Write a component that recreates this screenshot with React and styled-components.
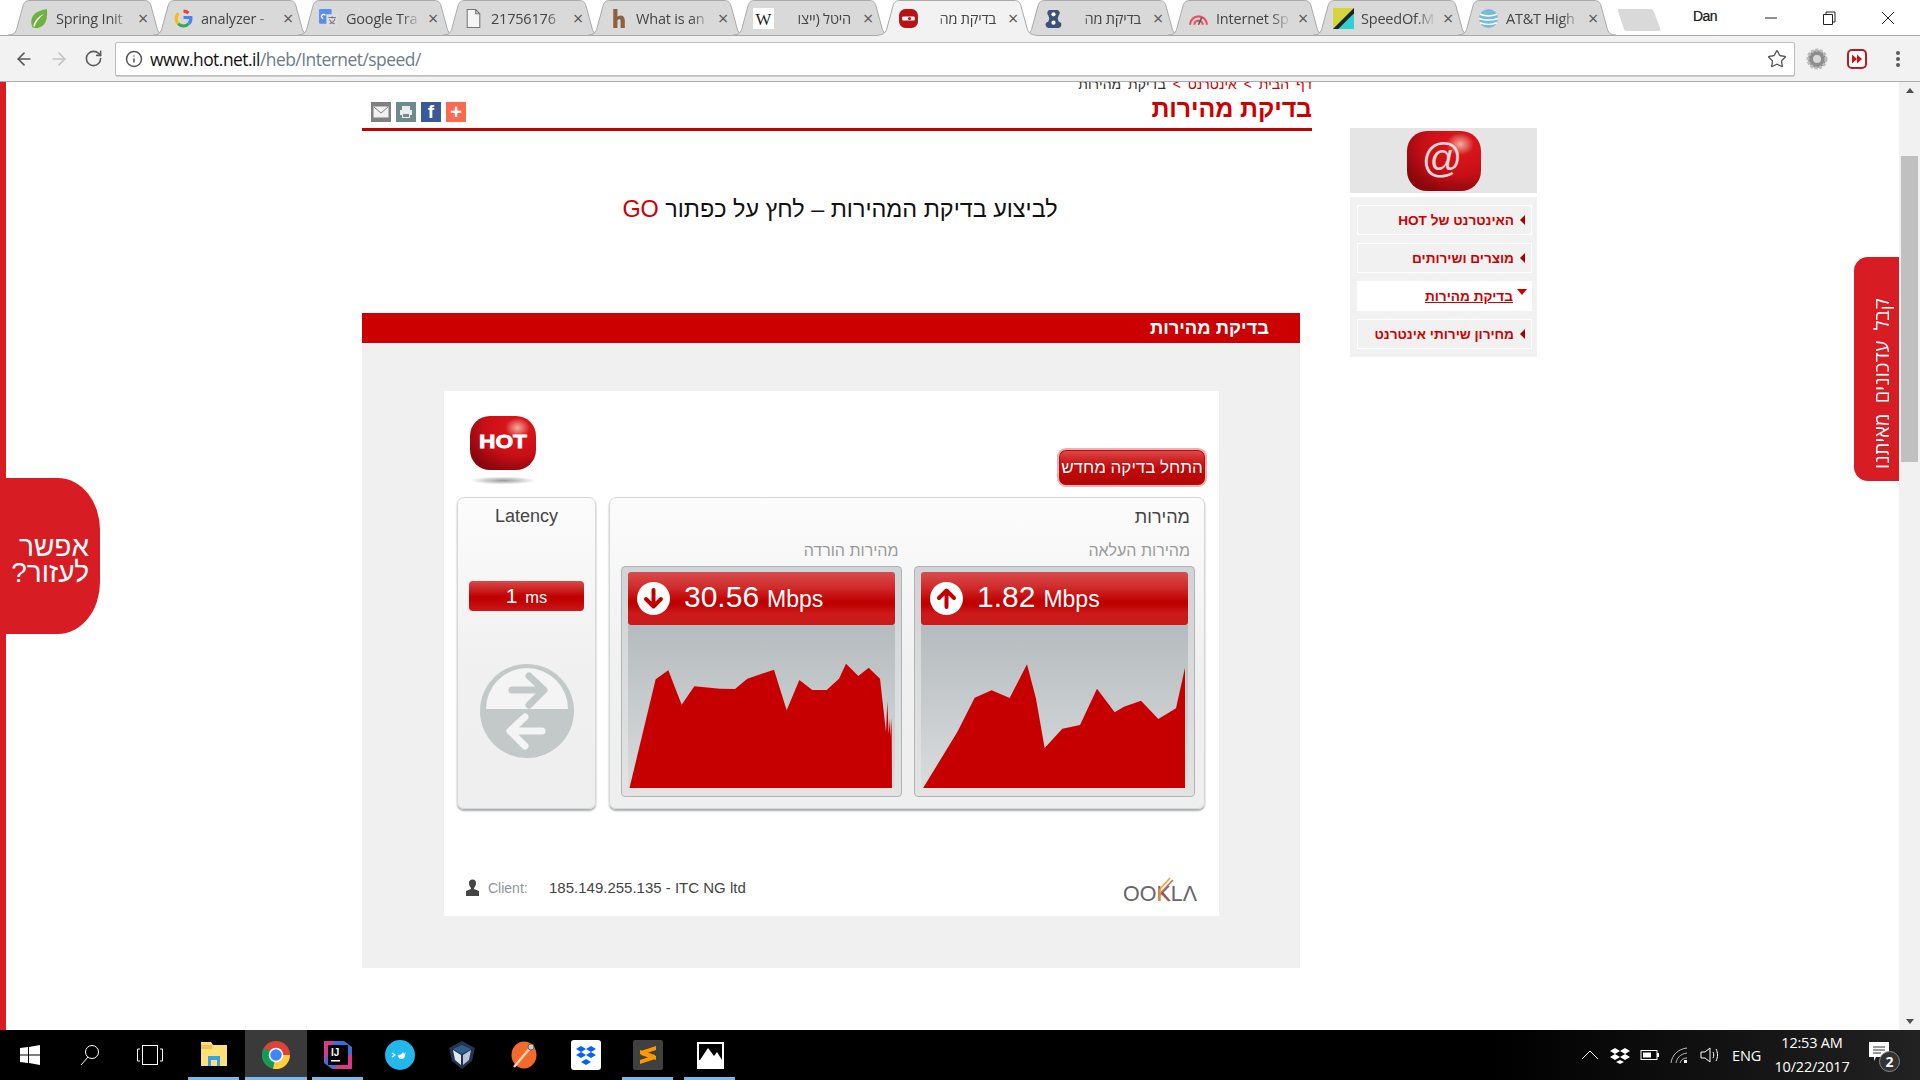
import React from 'react';
import styled, { createGlobalStyle } from 'styled-components';
import { ArrowLeft, ArrowRight, RotateCw, Info, Star } from 'lucide-react';

const Global = createGlobalStyle`
  html, body { margin: 0; padding: 0; height: 100%; overflow: hidden; background: #fff; }
  #root { height: 100%; }
  * { box-sizing: border-box; }
`;

const Shell = styled.div`
  width: 1920px; height: 1080px; display: flex; flex-direction: column; overflow: hidden;
  font-family: "Liberation Sans", Arial, sans-serif;
`;

/* ---------- browser chrome ---------- */
const TabStrip = styled.div`
  height: 36px; flex: none; display: flex; align-items: flex-start; padding-left: 8px; background: #fff;
  border-bottom: 1px solid #a9a9a9; position: relative;
`;
const TabBox = styled.div`
  position: relative; width: 160px; height: 36px; flex: none; margin-right: -15px;
  z-index: ${p => (p.$active ? 5 : 1)};
  display: flex; align-items: center; padding: 0 20px 0 20px; gap: 7px;
`;
const TabShape = styled.svg`
  position: absolute; left: 0; top: 0; width: 160px; height: 36px;
`;
const TabIcon = styled.svg`
  position: relative; width: 21px; height: 21px; flex: none;
`;
const TabTitle = styled.span`
  position: relative; flex: 1; min-width: 0; overflow: hidden; white-space: nowrap;
  font: 14.5px "Open Sans", sans-serif; color: #444; letter-spacing: -0.2px;
  direction: ${p => (p.$rtl ? 'rtl' : 'ltr')};
  padding-right: ${p => (p.$rtl ? 5 : 0)}px;
  -webkit-mask-image: linear-gradient(${p => (p.$rtl ? 'to left' : 'to right')}, #000 74%, transparent 100%);
  mask-image: linear-gradient(${p => (p.$rtl ? 'to left' : 'to right')}, #000 74%, transparent 100%);
`;
const TabClose = styled.span`
  position: relative; flex: none; font: 18px "Open Sans", sans-serif; color: #5a5a5a; width: 10px; text-align: center;
`;
const NewTab = styled.svg`
  width: 44px; height: 24px; margin: 8px 0 0 15px; flex: none; position: relative; z-index: 2;
`;
const WinArea = styled.div`
  margin-left: auto; display: flex; align-items: center; height: 34px; position: relative; margin-right: 2px;
`;
const UserName = styled.span`
  font: 14px "Liberation Sans", sans-serif; color: #222; margin-right: 25px; margin-top: -3px; letter-spacing: -.6px;
  text-shadow: 0 0 1px #888;
`;
const WinBtn = styled.svg`
  width: ${p => p.$w || 58}px; height: 14px; flex: none; margin-top: 2px;
`;

const Toolbar = styled.div`
  height: 46px; flex: none; background: #f2f2f2; border-bottom: 1px solid #acacac;
  display: flex; align-items: center; padding-left: 14px;
`;
const NavBtn = styled.span`
  width: 35px; display: flex; color: ${p => p.$off ? '#c4c4c4' : '#5a5a5a'};
`;
const Omnibox = styled.div`
  width: 1680px; height: 34px; margin-left: -4px; background: #fff; border: 1px solid #bdbdbd; border-radius: 2px;
  display: flex; align-items: center; padding: 0 7px 0 9px;
  box-shadow: 0 1px 0 #d0d0d0;
`;
const Url = styled.span`
  font: 17.4px "Open Sans", sans-serif; letter-spacing: -.5px; color: #111; margin-left: 7px; flex: 1;
  b { font-weight: 400; color: #6d7b8a; }
`;
const ToolIcons = styled.div`
  display: flex; align-items: center; flex: none;
`;
const ExtIcon = styled.svg`
  width: ${p => p.$w || 22}px; height: 22px; flex: none; margin-left: ${p => p.$ml}px;
`;

/* ---------- page ---------- */
const Viewport = styled.div`
  flex: 1; min-height: 0; display: flex; position: relative; overflow: hidden;
  border-left: 6px solid #d81c24; background: #fff;
`;
const Page = styled.div`
  flex: 1; display: flex; align-items: flex-start; padding-left: 356px; min-width: 0;
`;
const Main = styled.main`
  width: 950px; flex: none; direction: rtl;
`;
const Crumbs = styled.div`
  height: 8px; line-height: 12px; font-size: 14px; color: #333; overflow: visible;
  transform: translateY(-4px); word-spacing: 3px;
  span { color: #cc0000; }
`;
const TitleRow = styled.div`
  height: 41px; display: flex; justify-content: space-between; align-items: flex-start;
  border-bottom: 3px solid #c40000; padding: 5px 0 0 9px;
`;
const PageTitle = styled.h1`
  margin: 0; font-size: 25px; line-height: 26px; font-weight: 700; color: #cc0000; letter-spacing: -.1px;
`;
const ShareRow = styled.div`
  display: flex; gap: 5px; direction: ltr; margin-top: 7px; order: 2;
`;
const ShareBtn = styled.span`
  width: 20px; height: 20px; background: ${p => p.$c}; display: flex; align-items: center; justify-content: center;
  color: #fff; font: 700 ${p => p.$fs || 16}px "Liberation Sans", sans-serif;
`;
const Lead = styled.h2`
  margin: 0; height: 182px; padding: 64px 0 0 6px; text-align: center; font-weight: 400; font-size: 23.4px; line-height: 28px; color: #111;
  span { color: #cc0000; }
`;
const Band = styled.div`
  width: 938px; margin-right: 12px; height: 30px; background: #cc0000; color: #fff; font-weight: 700; font-size: 18.4px; line-height: 30px; padding-right: 31px;
`;
const Panel = styled.section`
  width: 938px; margin-right: 12px; height: 625px; background: #f0f0f0; padding: 48px 81px 0 82px; direction: ltr;
`;
const Card = styled.div`
  width: 775px; height: 525px; background: #fff; padding: 0 14px 0 13px;
`;
const CardTop = styled.div`
  height: 106px; display: flex; justify-content: space-between; align-items: flex-start;
`;
const Logo = styled.svg`
  width: 70px; height: 72px; margin: 25px 0 0 11px;
`;
const Restart = styled.button`
  width: 150px; height: 39px; margin: 57px -2px 0 0; padding: 0 2px; border: 2px solid #eeb0b0; border-radius: 9px;
  background: linear-gradient(#e04c4c 0, #cc2222 30%, #c40808 55%, #b00808 100%);
  color: #fff; font: 17px "Liberation Sans", sans-serif; direction: rtl; text-shadow: 0 0 1px #700; white-space: nowrap;
  box-shadow: inset 0 0 0 1px #b80c0c;
`;
const Panes = styled.div`
  display: flex; gap: 13px; height: 312px;
`;
const Pane = styled.div`
  height: 312px; border: 1px solid #d6d8d8; border-radius: 7px; width: ${p => p.$w}px; flex: none;
  background: linear-gradient(#fcfcfc 0, #f0f0f0 55%, #efefef 100%);
  box-shadow: 0 2px 2px #a8adaf;
`;
const LatencyPane = styled(Pane)`
  display: flex; flex-direction: column; align-items: center;
`;
const PaneTitle = styled.div`
  font-size: 18px; line-height: 22px; color: #444; padding-top: 7px;
`;
const LatencyValue = styled.div`
  width: 115px; height: 30px; margin-top: 54px; border-radius: 4px; color: #fff; text-align: center; line-height: 30px;
  background: linear-gradient(#d84a4a 0, #c00000 52%, #c00000 62%, #cc1818 100%);
  font-size: 16.5px;
  b { font-weight: 400; font-size: 21px; margin-right: 3px; }
`;
const LatencyDial = styled.svg`
  width: 96px; height: 96px; margin-top: 52px;
`;
const SpeedPane = styled(Pane)`
  direction: rtl; padding: 0 14px 0 11px;
`;
const SpeedTitle = styled(PaneTitle)`
  padding: 8px 0 0 0; height: 40px;
`;
const Labels = styled.div`
  display: flex; gap: 14px; height: 28px;
`;
const Label = styled.div`
  width: 282px; font-size: 16px; line-height: 26px; color: #9a9a9a;
`;
const Gauges = styled.div`
  display: flex; gap: 12px; direction: ltr;
`;
const Gauge = styled.div`
  width: 281px; height: 231px; border: 1px solid #b0b4b6; border-radius: 4px; padding: 5px 6px 0;
  background: linear-gradient(#d0d4d6, #e3e3e3);
`;
const GaugeHead = styled.div`
  height: 53px; border-radius: 3px; display: flex; align-items: center; color: #fff; padding-left: 9px;
  background: linear-gradient(#d84c4c 0, #cf2a2a 30%, #c00000 55%, #c00000 62%, #cc1a1a 78%);
`;
const GaugeIcon = styled.svg`
  width: 33px; height: 33px; flex: none; margin-right: 14px;
`;
const Num = styled.span`
  font-size: 30px; line-height: 30px; margin-right: 8px; margin-top: -4px;
`;
const Unit = styled.span`
  font-size: 23px; margin-top: 2px;
`;
const ChartBox = styled.div`
  height: 163px; background: linear-gradient(#b5bbbe, #d9dcdd);
`;
const Chart = styled.svg`
  display: block; width: 267px; height: 163px;
`;
const Foot = styled.div`
  display: flex; align-items: flex-start; height: 107px; padding-top: 70px; font-size: 14px; color: #444;
`;
const ClientIcon = styled.svg`
  width: 15px; height: 17px; margin-left: 8px; flex: none;
`;
const ClientLabel = styled.span`
  color: #8d9499; margin-left: 8px; width: 61px; line-height: 18px;
`;
const ClientValue = styled.span`
  line-height: 18px; font-size: 15px;
`;
const Ookla = styled.svg`
  width: 76px; height: 28px; margin-left: auto; margin-right: 6px; margin-top: -2px;
`;

const Side = styled.aside`
  width: 187px; flex: none; margin-left: 38px; margin-top: 46px; direction: rtl;
`;
const SideHero = styled.div`
  height: 65px; background: #e5e5e5; display: flex; align-items: center; justify-content: center;
`;
const SideIcon = styled.svg`
  width: 74px; height: 60px; margin-left: 1px;
`;
const SideMenu = styled.nav`
  margin-top: 4px; background: #f1f1f1; padding: 8px 5px 8px 7px; display: flex; flex-direction: column; gap: 8px;
`;
const SideItem = styled.a`
  height: 30px; border: 1px solid #fff; background: ${p => (p.$on ? '#fff' : 'transparent')}; display: flex; align-items: center;
  padding-right: 5px; gap: 5px; color: #cc0000; font-weight: 700; font-size: 13.6px;
  text-decoration: ${p => (p.$on ? 'underline' : 'none')};
`;
const Caret = styled.i`
  width: 0; height: 0; flex: none; border-style: solid;
  ${p => p.$on
    ? 'border-width: 6px 5px 0 5px; border-color: #cc0000 transparent transparent; margin: -8px -1px 0 -1px;'
    : 'border-width: 5px 5px 5px 0; border-color: transparent #a80000 transparent transparent; margin-left: 1px; margin-right: 1px;'}
`;

const Scrollbar = styled.div`
  width: 21px; flex: none; background: #f1f1f1; display: flex; flex-direction: column; align-items: center; padding-top: 6px; position: relative;
`;
const ScrollArrow = styled.i`
  width: 0; height: 0; border-left: 4px solid transparent; border-right: 4px solid transparent;
  ${p => p.$down ? 'border-top: 5px solid #505050; margin-top: auto; margin-bottom: 6px;' : 'border-bottom: 5px solid #505050;'}
`;
const ScrollThumb = styled.div`
  width: 17px; height: 306px; background: #c0c0c0; margin-top: 63px;
`;

const HelpBlob = styled.div`
  position: absolute; left: 0; top: 396px; width: 94px; height: 156px; background: #d81c24;
  border-radius: 0 42px 42px 0 / 0 52px 52px 0;
  color: #fff; direction: rtl; font-size: 28px; line-height: 26px; padding: 56px 11px 0 0; text-align: right;
  display: flex; flex-direction: column;
`;
const UpdatesTab = styled.div`
  position: absolute; right: 21px; top: 175px; width: 45px; height: 224px; background: #d81c24; border-radius: 14px 0 0 14px;
  display: flex; align-items: center; justify-content: flex-start; padding-bottom: 12px;
`;
const UpdatesText = styled.span`
  writing-mode: vertical-rl; transform: rotate(180deg); direction: rtl; color: #fff; font-size: 20px; white-space: pre;
  margin: 0 0 0 14px; height: 212px; text-align: left;
  font-family: "Open Sans", sans-serif;
`;

/* ---------- taskbar ---------- */
const Taskbar = styled.div`
  height: 50px; flex: none; display: flex; align-items: stretch;
  background: linear-gradient(90deg, #000 0, #000 78%, #222 100%);
`;
const SysBtn = styled.div`
  width: 60px; flex: none; display: flex; align-items: center; justify-content: center;
`;
const AppBtn = styled.div`
  width: 62px; flex: none; display: flex; align-items: center; justify-content: center; position: relative;
  margin-left: ${p => p.$ml || 0}px;
  background: ${p => (p.$active ? '#3a3a3a' : 'transparent')};
  &::after {
    content: ''; position: absolute; bottom: 0; height: 3px; background: #76b9ed;
    left: ${p => (p.$active ? 0 : '5px')}; right: ${p => (p.$active ? 0 : '6px')};
    display: ${p => (p.$open ? 'block' : 'none')};
  }
`;
const Tray = styled.div`
  margin-left: auto; display: flex; align-items: center; color: #fff; font: 15px "Open Sans", sans-serif;
`;
const TrayIcon = styled.svg`
  width: 22px; height: 20px; margin-right: 8px; flex: none;
`;
const Lang = styled.span`
  margin: 0 0 0 3px; font-size: 14.5px; letter-spacing: -.2px;
`;
const Clock = styled.div`
  width: 100px; margin-left: 1px; text-align: center; line-height: 24px; font-size: 14.5px; letter-spacing: -.2px;
`;
const Notify = styled.div`
  width: 31px; height: 32px; position: relative; margin: 6px 20px 0 7px;
`;
const NotifyBadge = styled.span`
  position: absolute; left: 10px; top: 9px; width: 21px; height: 21px; border-radius: 50%; background: #333; border: 1px solid #888;
  font: 700 14px/19px "Open Sans", sans-serif; text-align: center; color: #fff;
`;

/* ---------- drawings ---------- */
const fav = {
  spring: <><path d="M4 18C1 10 5 3 18 1c1 9-1 17-9 18-2 0-4 0-5-1z" fill="#6db33f" /><path d="M5 17C7 11 10 8 15 6 11 9 8 13 6 18z" fill="#fff" /></>,
  google: <><path d="M10 3a7 7 0 0 1 4.8 1.9" fill="none" stroke="#ea4335" strokeWidth="3" /><path d="M5.2 5A7 7 0 0 0 5 15" fill="none" stroke="#fbbc05" strokeWidth="3" /><path d="M5 15a7 7 0 0 0 10 0" fill="none" stroke="#34a853" strokeWidth="3" /><path d="M15 15a7 7 0 0 0 2-6h-7" fill="none" stroke="#4285f4" strokeWidth="3" /></>,
  translate: <><rect x="1" y="1" width="12" height="14" rx="1" fill="#5b8def" /><rect x="8" y="6" width="11" height="12" fill="#ddd" /><path d="M10 9h7M13.5 8v2M11 15c3-1 5-3 5-5M11 11c1 2 3 4 5 4" stroke="#777" fill="none" /><path d="M5 10a2 2 0 1 1 2-3" fill="none" stroke="#fff" strokeWidth="1.3" /></>,
  doc: <path d="M4 1.5h8l4 4v13H4zM12 1.5v4h4" fill="#f5f5f5" stroke="#777" />,
  h: <path d="M5 1h4v7c4-2 7 0 7 4v7h-4v-7c0-1.500-2-2-3 0v7H5z" fill="#8a6240" />,
  wiki: <><rect width="20" height="20" fill="#fff" /><text x="10" y="16" fontSize="16" fontFamily="Liberation Serif" textAnchor="middle" fill="#222">W</text></>,
  hot: <><rect x="1" y="1" width="18" height="18" rx="6" fill="#b81217" /><rect x="4" y="8" width="12" height="4" fill="#fff" rx="1" /><circle cx="11" cy="10" r="1.500" fill="#b81217" /></>,
  bee: <><path d="M6 2h8a3 3 0 0 1 1 5l-1 3 1 3a3 3 0 0 1-1 6H6a3 3 0 0 1-1-6l1-3-1-3a3 3 0 0 1 1-5z" fill="#3c5078" /><circle cx="10" cy="6" r="2" fill="#fff" /><circle cx="10" cy="14" r="2" fill="#fff" /></>,
  arc: <><path d="M2 16a8 8 0 0 1 16 0" fill="none" stroke="#e8505b" strokeWidth="2" /><path d="M6 16a4 4 0 0 1 8 0" fill="none" stroke="#e8505b" strokeWidth="2" /><path d="M10 16l3-7" stroke="#555" strokeWidth="1.500" /></>,
  speedof: <><rect width="20" height="20" fill="#d6d63a" /><path d="M20 0v20H0z" fill="#2fd0d8" /><path d="M0 20L20 0v5L5 20z" fill="#222" /></>,
  att: <><circle cx="10" cy="10" r="9" fill="#7ab8dc" /><path d="M2 6c5 2 11 2 16 0M1 10c6 2 12 2 18 0M2 14c5 2 11 2 16 0" stroke="#fff" strokeWidth="1.400" fill="none" /></>,
};

const tabs = [
  ['Spring Init', 'spring'], ['analyzer -', 'google'], ['Google Tra', 'translate'],
  ['21756176', 'doc'], ['What is an', 'h'], ['היטל (ייצו', 'wiki', 1], ['בדיקת מה', 'hot', 1, 1],
  ['בדיקת מה', 'bee', 1], ['Internet Sp', 'arc'], ['SpeedOf.M', 'speedof'], ['AT&T High', 'att'],
];

function Tab({ title, icon, rtl, active }) {
  const d = 'M0 35C6 35 8 32 9 28L15 6C16 2 18 .5 22 .5L136 .5C140 .5 142 2 143 6L149 28C150 32 152 35 158 35';
  return (
    <TabBox $active={active}>
      <TabShape viewBox="0 0 160 36">
        <path d={d + (active ? 'L158 36L0 36Z' : 'Z')} fill={active ? '#f2f2f2' : '#d9d9d9'} stroke="none" />
        <path d={d} fill="none" stroke="#a9a9a9" />
      </TabShape>
      <TabIcon viewBox="0 0 20 20">{fav[icon]}</TabIcon>
      <TabTitle $rtl={rtl}>{title}</TabTitle>
      <TabClose>×</TabClose>
    </TabBox>
  );
}

const dl = '568,1195 647,867 685,840 725,943 763,888 840,895 885,896 922,865 1002,838 1040,960 1078,869 1117,899 1160,899 1197,865 1218,820 1255,857 1286,832 1320,865 1338,1025 1342,932 1346,1030 1350,985 1352,1040 1355,980 1356,1195';
const ul = '125,1077 230,905 282,802 333,780 387,803 439,702 466,805 492,953 545,895 598,884 649,775 702,846 730,829 781,811 833,866 886,834 913,712 913,1077';

const Sheen = ({ id, dark = '#8a060c', mid = '#c80f16', light = '#f0b0a0' }) => (
  <defs>
    <radialGradient id={id} cx="0.72" cy="0.22" r="0.85">
      <stop offset="0" stopColor={light} />
      <stop offset="0.22" stopColor="#d8141a" />
      <stop offset="0.6" stopColor={mid} />
      <stop offset="1" stopColor={dark} />
    </radialGradient>
  </defs>
);

export default function App() {
  return (
    <Shell>
      <Global />
      <TabStrip>
        {tabs.map(([t, i, r, a]) => <Tab key={t + i} title={t} icon={i} rtl={r} active={a} />)}
        <NewTab viewBox="0 0 44 24" style={{ marginLeft: 15 }}>
          <path d="M1 1H32C34 1 35 2 36 4L42 20C43 22 42 23 40 23H9C7 23 6 22 5.500 20L0 3C0 2 0 1 1 1Z" fill="#d9d9d9" />
        </NewTab>
        <WinArea>
          <UserName>Dan</UserName>
          <WinBtn viewBox="0 0 58 14"><path d="M23 7H35" stroke="#222" /></WinBtn>
          <WinBtn viewBox="0 0 58 14"><path d="M23.500 3.500H32.500V13.500H23.500ZM26 3.500V1H35V11H32.500" fill="none" stroke="#222" /></WinBtn>
          <WinBtn viewBox="0 0 60 14" $w={60}><path d="M24 1L36 13M36 1L24 13" stroke="#222" fill="none" /></WinBtn>
        </WinArea>
      </TabStrip>
      <Toolbar>
        <NavBtn><ArrowLeft size={20} strokeWidth={2} /></NavBtn>
        <NavBtn $off><ArrowRight size={20} strokeWidth={2} /></NavBtn>
        <NavBtn><RotateCw size={19} strokeWidth={2} /></NavBtn>
        <Omnibox>
          <Info size={18} color="#555" />
          <Url>www.hot.net.il<b>/heb/Internet/speed/</b></Url>
          <Star size={20} color="#555" strokeWidth={1.6} />
        </Omnibox>
        <ToolIcons>
          <ExtIcon viewBox="0 0 22 22" $ml={11}>
            <circle cx="11" cy="11" r="9" fill="#8d8d8d" stroke="#bbb" strokeWidth="3" strokeDasharray="3 1.500" />
            <circle cx="11" cy="11" r="4" fill="#d8d8d8" />
          </ExtIcon>
          <ExtIcon viewBox="0 0 22 22" $ml={18}>
            <rect x="2" y="2" width="18" height="18" rx="4" fill="#fff" stroke="#b81c22" strokeWidth="2" />
            <path d="M6 6.500L11 11 6 15.500ZM11 6.500L16 11 11 15.500Z" fill="#c8141a" />
          </ExtIcon>
          <ExtIcon viewBox="0 0 4 22" $w={4} $ml={28}>
            <circle cx="2" cy="5" r="2" fill="#5a5a5a" />
            <circle cx="2" cy="11" r="2" fill="#5a5a5a" />
            <circle cx="2" cy="17" r="2" fill="#5a5a5a" />
          </ExtIcon>
        </ToolIcons>
      </Toolbar>

      <Viewport>
        <Page>
          <Main>
            <Crumbs><span>דף הבית &gt; אינטרנט &gt;</span> בדיקת מהירות</Crumbs>
            <TitleRow>
              <PageTitle>בדיקת מהירות</PageTitle>
              <ShareRow>
                <ShareBtn $c="#808080">
                  <svg width="16" height="12" viewBox="0 0 16 12"><rect x=".5" y=".5" width="15" height="11" fill="#f2f2f2" /><path d="M1 1l7 6 7-6" fill="none" stroke="#808080" /></svg>
                </ShareBtn>
                <ShareBtn $c="#6f8a8a">
                  <svg width="14" height="14" viewBox="0 0 14 14"><path d="M3 1h8v4h2v5h-2v3H3v-3H1V5h2z" fill="#e8eeee" /><path d="M4 9h6v3H4z" fill="#6f8a8a" /></svg>
                </ShareBtn>
                <ShareBtn $c="#3b5998" $fs={19}>f</ShareBtn>
                <ShareBtn $c="#fb6a50" $fs={20}>+</ShareBtn>
              </ShareRow>
            </TitleRow>
            <Lead>לביצוע בדיקת המהירות – לחץ על כפתור <span>GO</span></Lead>
            <Band>בדיקת מהירות</Band>
            <Panel>
              <Card>
                <CardTop>
                  <Logo viewBox="0 0 70 72">
                    <Sheen id="hotg" />
                    <defs>
                      <radialGradient id="shad"><stop offset="0" stopColor="#999" /><stop offset="1" stopColor="#fff" /></radialGradient>
                    </defs>
                    <rect x="2" y="0" width="66" height="54" rx="20" fill="url(#hotg)" />
                    <text x="35" y="32" textAnchor="middle" fontFamily="Liberation Sans" fontWeight="700" fontSize="19" fill="#fff" stroke="#fff" strokeWidth=".8" textLength="48" lengthAdjust="spacingAndGlyphs">HOT</text>
                    <ellipse cx="35" cy="64.500" rx="33" ry="4" fill="url(#shad)" />
                  </Logo>
                  <Restart>התחל בדיקה מחדש</Restart>
                </CardTop>
                <Panes>
                  <LatencyPane $w={139}>
                    <PaneTitle>Latency</PaneTitle>
                    <LatencyValue><b>1</b> ms</LatencyValue>
                    <LatencyDial viewBox="0 0 96 96">
                      <circle cx="48" cy="48" r="47" fill="#c3c9c9" />
                      <path d="M7 46A41 41 0 0 1 89 46Z" fill="#f4f4f4" />
                      <path d="M33 27H62M50 13L65 27 50 42" fill="none" stroke="#c3c9c9" strokeWidth="7" strokeLinecap="round" strokeLinejoin="round" />
                      <path d="M63 68H34M46 54L31 68 46 83" fill="none" stroke="#f4f4f4" strokeWidth="7" strokeLinecap="round" strokeLinejoin="round" />
                    </LatencyDial>
                  </LatencyPane>
                  <SpeedPane $w={596}>
                    <SpeedTitle>מהירות</SpeedTitle>
                    <Labels>
                      <Label>מהירות העלאה</Label>
                      <Label>מהירות הורדה</Label>
                    </Labels>
                    <Gauges>
                      <Gauge>
                        <GaugeHead>
                          <GaugeIcon viewBox="0 0 33 33">
                            <circle cx="16.500" cy="16.500" r="16.500" fill="#fff" />
                            <path d="M16.500 8V24M9 17L16.500 24.500 24 17" fill="none" stroke="#c00000" strokeWidth="4" strokeLinecap="round" strokeLinejoin="round" />
                          </GaugeIcon>
                          <Num>30.56</Num><Unit>Mbps</Unit>
                        </GaugeHead>
                        <ChartBox>
                          <Chart viewBox="564 704 801 489"><polygon points={dl} fill="#c60000" /></Chart>
                        </ChartBox>
                      </Gauge>
                      <Gauge>
                        <GaugeHead>
                          <GaugeIcon viewBox="0 0 33 33">
                            <circle cx="16.500" cy="16.500" r="16.500" fill="#fff" />
                            <path d="M16.500 25V9M9 16L16.500 8.500 24 16" fill="none" stroke="#c00000" strokeWidth="4" strokeLinecap="round" strokeLinejoin="round" />
                          </GaugeIcon>
                          <Num>1.82</Num><Unit>Mbps</Unit>
                        </GaugeHead>
                        <ChartBox>
                          <Chart viewBox="121 584 801 489"><polygon points={ul} fill="#c60000" /></Chart>
                        </ChartBox>
                      </Gauge>
                    </Gauges>
                  </SpeedPane>
                </Panes>
                <Foot>
                  <ClientIcon viewBox="0 0 15 17">
                    <path d="M4 4a3.500 3.500 0 0 1 7 0c0 2-1 4-2 5v1l5 2v5H1v-5l5-2V9C5 8 4 6 4 4z" fill="#444" />
                  </ClientIcon>
                  <ClientLabel>Client:</ClientLabel>
                  <ClientValue>185.149.255.135 - ITC NG ltd</ClientValue>
                  <Ookla viewBox="0 0 76 28">
                    <text x="0" y="24" fontFamily="Liberation Sans" fontSize="22" fill="#666" textLength="74" lengthAdjust="spacingAndGlyphs">OOKLΛ</text>
                    <path d="M37 24V12L47 1" fill="none" stroke="#f0a030" strokeWidth="1.500" />
                    <path d="M38.500 15L50 3" fill="none" stroke="#e2603a" strokeWidth="1.500" />
                    <path d="M38 16L46 24" fill="none" stroke="#d8402a" strokeWidth="1.500" />
                  </Ookla>
                </Foot>
              </Card>
            </Panel>
          </Main>
          <Side>
            <SideHero>
              <SideIcon viewBox="0 0 74 60">
                <Sheen id="atg" />
                <rect x="0" y="0" width="74" height="60" rx="20" fill="url(#atg)" />
                <text x="35" y="41" textAnchor="middle" fontFamily="Liberation Sans" fontSize="40" fill="#f3d6d6">@</text>
              </SideIcon>
            </SideHero>
            <SideMenu>
              <SideItem><Caret />האינטרנט של HOT</SideItem>
              <SideItem><Caret />מוצרים ושירותים</SideItem>
              <SideItem $on><Caret $on />בדיקת מהירות</SideItem>
              <SideItem><Caret />מחירון שירותי אינטרנט</SideItem>
            </SideMenu>
          </Side>
        </Page>
        <Scrollbar>
          <ScrollArrow />
          <ScrollThumb />
          <ScrollArrow $down />
        </Scrollbar>
        <HelpBlob><span>אפשר</span><span>לעזור?</span></HelpBlob>
        <UpdatesTab><UpdatesText>קבל  עדכונים  מאיתנו</UpdatesText></UpdatesTab>
      </Viewport>

      <Taskbar>
        <SysBtn>
          <svg width="20" height="20" viewBox="0 0 20 20"><path d="M0 3l8-1v7.500H0zM9 2l11-2v9.500H9zM0 10.500h8V18l-8-1zM9 10.500h11V20L9 18z" fill="#fff" /></svg>
        </SysBtn>
        <SysBtn>
          <svg width="20" height="22" viewBox="0 0 20 22"><circle cx="12" cy="8" r="6.500" fill="none" stroke="#fff" /><path d="M8 13L1 21" stroke="#fff" /></svg>
        </SysBtn>
        <SysBtn>
          <svg width="26" height="20" viewBox="0 0 26 20"><rect x="5.500" y=".5" width="15" height="19" fill="none" stroke="#fff" /><path d="M3 4H.5V16H3M23 4H25.500V16H23" fill="none" stroke="#fff" /></svg>
        </SysBtn>
        <AppBtn $open $ml={3}>
          <svg width="28" height="26" viewBox="0 0 28 26"><path d="M1 0H11L13 3H27V24H1z" fill="#ffe07a" /><path d="M1 3H12V7H1z" fill="#f2c24a" /><path d="M8 24V14H20V24H17V18H11V24z" fill="#3aa0e0" /></svg>
        </AppBtn>
        <AppBtn $open $active>
          <svg width="28" height="28" viewBox="0 0 28 28">
            <circle cx="14" cy="14" r="14" fill="#db4437" />
            <path d="M14 14L1.900 7A14 14 0 0 0 11 27.700z" fill="#0f9d58" />
            <path d="M14 14H28A14 14 0 0 1 11 27.700z" fill="#ffcd40" />
            <circle cx="14" cy="14" r="6.500" fill="#4285f4" stroke="#fff" strokeWidth="1.500" />
          </svg>
        </AppBtn>
        <AppBtn $open>
          <svg width="28" height="28" viewBox="0 0 28 28">
            <path d="M0 0H20L28 6V28H8L0 22z" fill="#3a6fd8" /><path d="M0 0H10L0 22zM8 28L28 12V28z" fill="#d83a8a" />
            <rect x="4" y="4" width="20" height="20" fill="#000" />
            <text x="7" y="15" fontFamily="Liberation Sans" fontWeight="700" fontSize="10" fill="#fff">IJ</text>
            <rect x="7" y="19" width="9" height="1.500" fill="#fff" />
          </svg>
        </AppBtn>
        <AppBtn>
          <svg width="30" height="30" viewBox="0 0 30 30">
            <ellipse cx="15" cy="15" rx="15" ry="15" fill="#22b8eb" />
            <path d="M7 13l3 2-3 2" fill="none" stroke="#fff" strokeWidth="1.300" /><path d="M13 15c3 0 4-1 5-3l1 2 2-2-1 3c0 3-2 4-4 4s-3-2-3-4z" fill="#fff" />
          </svg>
        </AppBtn>
        <AppBtn>
          <svg width="30" height="30" viewBox="0 0 30 30">
            <path d="M15 1L28 8 25 21 15 29 5 21 2 8z" fill="#22344e" /><path d="M15 5L24 9 15 14 6 9z" fill="#2f5f8f" /><path d="M6 10L14 15V25L8 20z" fill="#dfe8f0" /><path d="M24 10L16 15V25L22 20z" fill="#b8c6d4" />
          </svg>
        </AppBtn>
        <AppBtn>
          <svg width="26" height="28" viewBox="0 0 26 28">
            <ellipse cx="13" cy="14" rx="12.500" ry="13.500" fill="#f26b2a" /><path d="M3 26L20 6" stroke="#f8d0b8" strokeWidth="2.500" /><circle cx="20" cy="6" r="3" fill="#ccc" stroke="#666" />
          </svg>
        </AppBtn>
        <AppBtn>
          <svg width="30" height="30" viewBox="0 0 30 30">
            <rect width="30" height="30" rx="3" fill="#fff" />
            <path d="M10 6l5 3-5 3-5-3zM20 6l5 3-5 3-5-3zM10 12l5 3-5 3-5-3zM20 12l5 3-5 3-5-3zM15 19l5 3-5 3-5-3z" fill="#0061fe" />
          </svg>
        </AppBtn>
        <AppBtn $open>
          <svg width="30" height="30" viewBox="0 0 30 30">
            <rect width="30" height="30" rx="2" fill="#404040" />
            <path d="M23 6L8 11V15L23 20V16L14 13 23 10zM7 24L22 19V15L7 10V14L16 17 7 20z" fill="#ff9800" />
          </svg>
        </AppBtn>
        <AppBtn $open>
          <svg width="27" height="27" viewBox="0 0 27 27">
            <rect width="27" height="27" fill="#fff" /><rect x="2" y="2" width="23" height="16" fill="#000" /><path d="M3 18L11 6 17 14 20 10 25 18V24H3z" fill="#fff" />
          </svg>
        </AppBtn>
        <Tray>
          <TrayIcon viewBox="0 0 22 20"><path d="M3 14L11 6 19 14" fill="none" stroke="#fff" /></TrayIcon>
          <TrayIcon viewBox="0 0 22 20"><path d="M6 3l5 3-5 3-5-3zM16 3l5 3-5 3-5-3zM6 9l5 3-5 3-5-3zM16 9l5 3-5 3-5-3zM11 15l4 2-4 2-4-2z" fill="#fff" /></TrayIcon>
          <TrayIcon viewBox="0 0 22 20"><rect x="2" y="5.500" width="16" height="9" fill="none" stroke="#fff" /><rect x="4" y="7.500" width="8" height="5" fill="#fff" /><rect x="18" y="8" width="2" height="4" fill="#fff" /></TrayIcon>
          <TrayIcon viewBox="0 0 22 20"><path d="M2 18C3 10 9 4 18 3M7 18C8 13 11 9 18 8M11 18C12 15 14 13 18 13" fill="none" stroke="#bbb" /><rect x="15" y="15" width="3" height="3" fill="#fff" /></TrayIcon>
          <TrayIcon viewBox="0 0 22 20"><path d="M2 7H6L11 3V17L6 13H2Z" fill="none" stroke="#fff" /><path d="M14 7c1 2 1 4 0 6M17 4c2 4 2 8 0 12" fill="none" stroke="#fff" /></TrayIcon>
          <Lang>ENG</Lang>
          <Clock><div>12:53 AM</div><div>10/22/2017</div></Clock>
          <Notify>
            <svg width="21" height="20" viewBox="0 0 21 20"><path d="M0 0H20V15H7L5 19V15H0Z" fill="#fff" /><path d="M4 5H16M4 8H16M4 11H12" stroke="#333" /></svg>
            <NotifyBadge>2</NotifyBadge>
          </Notify>
        </Tray>
      </Taskbar>
    </Shell>
  );
}
